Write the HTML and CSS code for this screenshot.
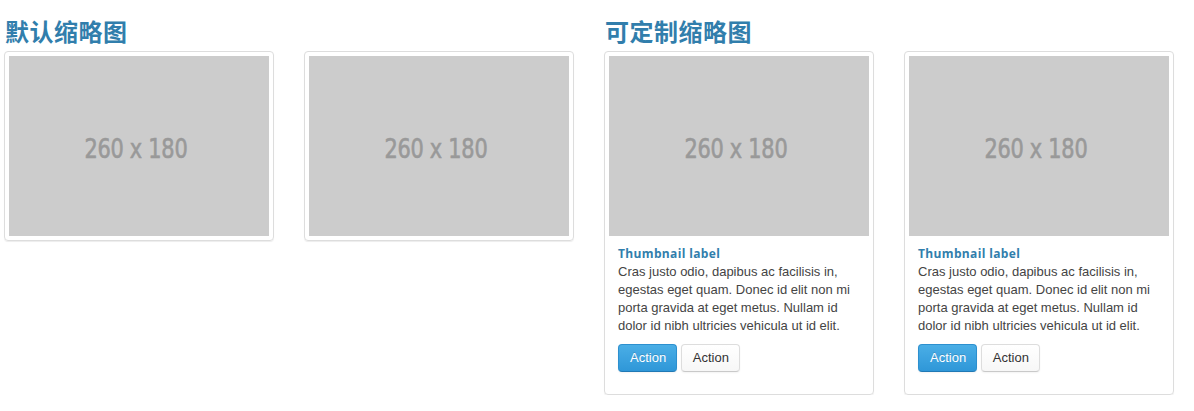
FILE: index.html
```html
<!DOCTYPE html>
<html lang="zh-CN">
<head>
<meta charset="utf-8">
<title>缩略图</title>
<link rel="stylesheet" href="styles.css">
</head>
<body>
<div class="row">
  <section class="span6">
    <h3 class="title">默认缩略图</h3>
    <ul class="thumbnails">
      <li class="thumbnail"><div class="ph"><span>260 x 180</span></div></li>
      <li class="thumbnail"><div class="ph"><span>260 x 180</span></div></li>
    </ul>
  </section>
  <section class="span6">
    <h3 class="title">可定制缩略图</h3>
    <ul class="thumbnails">
      <li class="thumbnail">
        <div class="ph"><span>260 x 180</span></div>
        <div class="caption">
          <h5>Thumbnail label</h5>
          <p>Cras justo odio, dapibus ac facilisis in, egestas eget quam. Donec id elit non mi porta gravida at eget metus. Nullam id dolor id nibh ultricies vehicula ut id elit.</p>
          <p><a class="btn btn-primary">Action</a> <a class="btn">Action</a></p>
        </div>
      </li>
      <li class="thumbnail">
        <div class="ph"><span>260 x 180</span></div>
        <div class="caption">
          <h5>Thumbnail label</h5>
          <p>Cras justo odio, dapibus ac facilisis in, egestas eget quam. Donec id elit non mi porta gravida at eget metus. Nullam id dolor id nibh ultricies vehicula ut id elit.</p>
          <p><a class="btn btn-primary">Action</a> <a class="btn">Action</a></p>
        </div>
      </li>
    </ul>
  </section>
</div>
</body>
</html>
```
FILE: styles.css
```css
* { box-sizing: content-box; }
html, body { margin: 0; padding: 0; background: #fff; }
body {
  font-family: "Liberation Sans", Arial, sans-serif;
  font-size: 13px;
  line-height: 18px;
  color: #444;
  padding: 11px 0 0 4px;
}
.row { display: flex; gap: 30px; align-items: flex-start; }
.span6 { width: 570px; }
.title {
  margin: 0;
  font-family: "Noto Sans CJK SC", sans-serif;
  font-size: 24px;
  line-height: 40px;
  font-weight: 700;
  color: #317eac;
  letter-spacing: 0.5px;
  padding-left: 1px;
}
.thumbnails {
  list-style: none;
  margin: 0;
  padding: 0;
  display: flex;
  gap: 30px;
  align-items: flex-start;
}
.thumbnail {
  width: 260px;
  padding: 4px;
  border: 1px solid #ddd;
  border-radius: 4px;
  box-shadow: 0 1px 1px rgba(0,0,0,0.075);
  line-height: 18px;
}
.ph {
  width: 260px;
  height: 180px;
  box-sizing: border-box;
  padding: 6px 6px 0 0;
  background: #ccc;
  color: #999;
  display: flex;
  align-items: center;
  justify-content: center;
  font-family: "DejaVu Sans Condensed", "DejaVu Sans", sans-serif;
  font-stretch: condensed;
  font-weight: 400;
  font-size: 27px;
  letter-spacing: -0.3px;
}
.ph span {
  display: inline-block;
  transform: scaleX(0.86);
  -webkit-text-stroke: 0.6px #999;
}
.caption { padding: 9px; color: #444; }
.caption h5 {
  margin: 0;
  font-family: "Open Sans", sans-serif;
  font-size: 12px;
  line-height: 18px;
  font-weight: 700;
  color: #317eac;
  letter-spacing: 0.35px;
}
.caption p { margin: 0 0 9px; }
.btn {
  display: inline-block;
  padding: 4px 10px 4px 11px;
  font-size: 13px;
  line-height: 18px;
  color: #333;
  background: linear-gradient(#ffffff, #f7f7f7);
  border: 1px solid #ddd;
  border-bottom-color: #c9c9c9;
  border-radius: 4px;
  box-shadow: 0 1px 2px rgba(0,0,0,0.05);
  cursor: pointer;
}
.btn-primary {
  color: #fff;
  background: linear-gradient(#4aaee6, #2f97d8);
  border-color: #2d90cf #2d90cf #2079b5;
  text-shadow: 0 -1px 0 rgba(0,0,0,0.15);
}
```
